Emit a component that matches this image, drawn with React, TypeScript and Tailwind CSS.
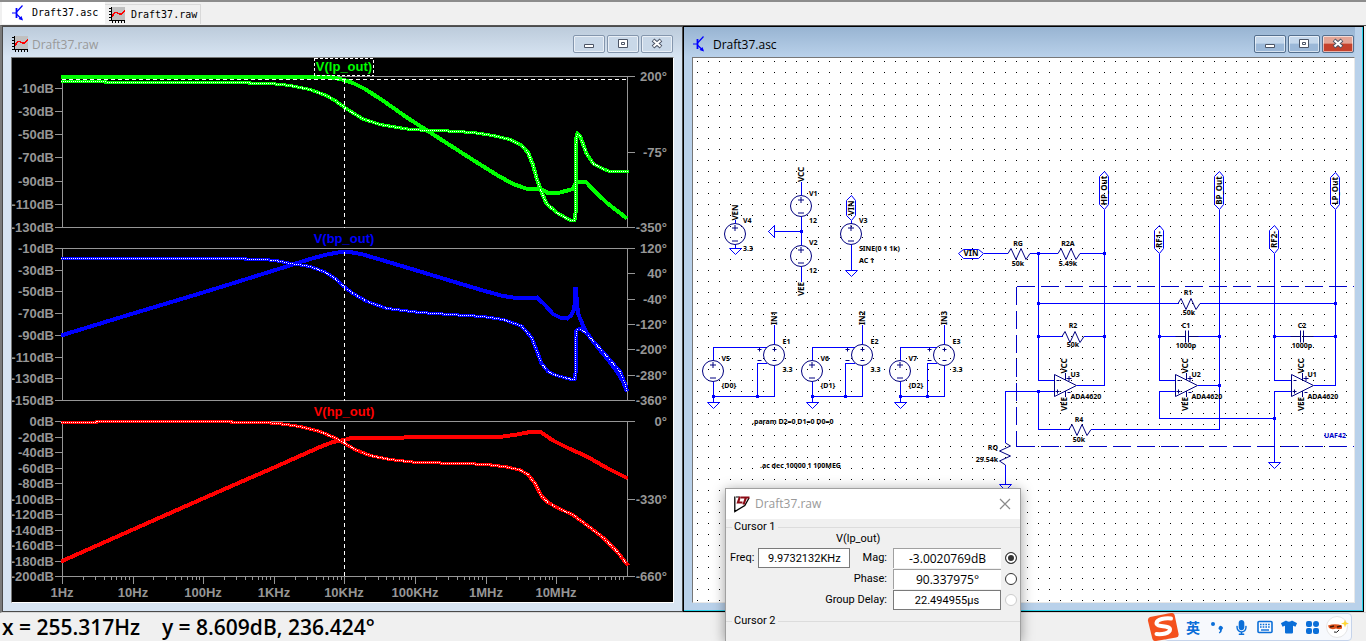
import { FaMicrophone, FaTshirt } from 'react-icons/fa';
import cn from 'clsx';

const styles = {
  axisText: 'fill-[#969696] font-["Liberation_Sans",sans-serif] text-[13px] font-bold',
  schematicText: 'fill-black font-["Noto_Sans",sans-serif] text-[7px] font-bold',
  netText: 'fill-black font-["Noto_Sans",sans-serif] text-[8px] font-bold',
  field: 'h-5 bg-white text-center text-black outline-none',
};

const LEFT = 62;
const RIGHT = 627;
const DECADE = 70.6;
const CURSOR_X = 344.5;

interface Tick {
  label: string;
  y: number;
}

interface Plot {
  name: string;
  color: string;
  top: number;
  bottom: number;
  left: Tick[];
  right: Tick[];
  magnitude: string;
  phase: string;
}

const ticks = (values: [string, number][]): Tick[] => values.map(([label, y]) => ({ label, y }));

const plots: Plot[] = [
  {
    name: 'V(lp_out)',
    color: '#00ff00',
    top: 76.5,
    bottom: 227.5,
    left: ticks([['-10dB', 88.5], ['-30dB', 111.5], ['-50dB', 134.5], ['-70dB', 157.5], ['-90dB', 181.5], ['-110dB', 204.5], ['-130dB', 227.5]]),
    right: ticks([['200°', 76.5], ['-75°', 152.5], ['-350°', 227.5]]),
    magnitude:
      '61,77 328,77 335,78 344,80 353,83 365,89 382,100 407,117.5 427,130.5 452,146.5 473,160 497,175 513,184 526,188.5 540,188.5 547,192.5 560,192.5 573,189 576,182 580,182.5 586,182 593,189.5 607,203 627,218.5',
    phase:
      '61,81.5 105,81.5 106,82.5 249,82.5 250,83.5 271,83.5 290,85.5 310,89.5 325,95 335,100.5 344,107 350,111 363,119 380,124.5 407,129 427,130.5 440,130.5 473,132.5 493,135.5 510,139.5 521,145 528,152.5 533,165 536.5,178 541.5,192 546.5,203.5 556.5,212.5 570,220 574.5,220.5 575.5,213 575.5,150 576.5,137 577.5,133.5 580,136 586.5,153.5 593.5,164 603.5,169 610,171.5 628,171.5',
  },
  {
    name: 'V(bp_out)',
    color: '#0000ff',
    top: 248.5,
    bottom: 400.5,
    left: ticks([['-10dB', 248.5], ['-30dB', 270.5], ['-50dB', 291.5], ['-70dB', 313.5], ['-90dB', 335.5], ['-110dB', 357.5], ['-130dB', 378.5], ['-150dB', 400.5]]),
    right: ticks([['120°', 248.5], ['40°', 273.5], ['-40°', 299.5], ['-120°', 324.5], ['-200°', 349.5], ['-280°', 375.5], ['-360°', 400.5]]),
    magnitude:
      '61,335.5 133,313.5 203,292.5 245,279.5 288,266 310,259 327,254.5 344,251.5 350,252 363,254.5 390,262.5 420,271.5 453,281.5 483,290.5 503,296 520,298.5 537,297.5 545,305 553,314 560,317.5 567,318.5 571,315.5 574,310 575,300 575.5,287 576.5,297 578,313.5 585,330 593,341.5 607,358.5 617,371.5 623,381.5 627,391.5',
    phase:
      '61,258.5 245,258.5 246,259.5 265,259.5 278,261 288,263 310,266.5 325,272 335,278.5 344,286.5 353,293.5 367,301.5 387,308.5 420,312.5 450,314.5 483,316.5 503,319.5 521.5,326 531.5,337.5 536.5,350 541.5,363.5 548,371.5 556.5,375.5 570,379 574.5,379.5 575.5,373 575.5,342 576.5,330 580,328.5 586.5,333.5 606.5,356 620,371.5 625,383.5 627,391.5',
  },
  {
    name: 'V(hp_out)',
    color: '#ff0000',
    top: 421.5,
    bottom: 576.5,
    left: ticks([['0dB', 421.5], ['-20dB', 437.5], ['-40dB', 452.5], ['-60dB', 468.5], ['-80dB', 483.5], ['-100dB', 499.5], ['-120dB', 514.5], ['-140dB', 530.5], ['-160dB', 545.5], ['-180dB', 561.5], ['-200dB', 576.5]]),
    right: ticks([['0°', 421.5], ['-330°', 499.5], ['-660°', 576.5]]),
    magnitude:
      '61,561.5 133,529.5 203,498.5 274,467.5 320,447 333,442 346,439.5 353,437.5 404,437.5 406,436.5 503,436.5 517,434.5 533,431.5 540,431.5 553,440.5 570,449 587,456.5 607,468 628,478.5',
    phase:
      '61,422.5 96,422.5 97,421.5 231,421.5 232,422.5 265,422.5 282,424 300,426.5 320,431.5 335,438 344,443 355,449.5 370,455.5 390,459.5 417,462.5 463,463.5 487,464.5 507,467 520,470 528,474.5 535,483.5 541.5,496 548,502.5 558,508 573,515 590,527.5 603,537.5 617,551.5 628,565.5',
  },
];

const frequencies = ['1Hz', '10Hz', '100Hz', '1KHz', '10KHz', '100KHz', '1MHz', '10MHz'];

function SchematicIcon() {
  return (
    <svg className="size-4 shrink-0" viewBox="0 0 16 16" fill="none" stroke="#0000ff" strokeWidth="1.2">
      <path d="M0 8h4M5 6.500l5.500-6M5 9.500l5 5" />
      <path d="M4.500 3v10" strokeWidth="1.800" />
      <path d="M11 15.500l-4.500-1.500 3-3z" fill="#0000ff" stroke="none" />
    </svg>
  );
}

function PlotIcon() {
  return (
    <svg className="size-4 shrink-0" viewBox="0 0 16 16" shapeRendering="crispEdges">
      <path d="M2 0h14v14H2z" fill="#c0c0c0" />
      <path d="M2.500 0v14M2 13.500h14" stroke="#000" />
      <path d="M0 1.500h2M0 4.500h2M0 7.500h2M0 10.500h2M0 13.500h2M3.500 14v2M6.500 14v2M9.500 14v2M12.500 14v2M15.500 14v2" stroke="#000" />
      <path d="M3 9.500l3-4h2l3 2 2-1 3-3" stroke="#ff0000" strokeWidth="1.600" fill="none" />
    </svg>
  );
}

function LtLogo() {
  return (
    <svg className="h-[18px] w-[18px] shrink-0" viewBox="0 0 18 18" fill="none">
      <path d="M1.800 1.500v15l10-6L16 3" stroke="#000" strokeWidth="1.300" />
      <path d="M3 2h3" stroke="#000" />
      <path d="M7 1.500L5 7.500h4.500M8 2.500h8.500M13 2.500L10.500 9.500" stroke="#8b0a14" strokeWidth="2.200" />
    </svg>
  );
}

function WindowButtons({ active }: { active?: boolean }) {
  const base = cn(
    'flex h-[18px] w-8 items-center justify-center rounded-xs border shadow-[inset_0_0_0_1px_#ffffff99]',
    active ? 'border-[#55708f] bg-linear-to-b from-[#c5d8ec] from-45% to-[#9bb8d8] to-50%' : 'border-[#8496ad] bg-[#c9d8e8]',
  );
  return (
    <div className="flex gap-0.5">
      <button type="button" aria-label="Minimize" className={base}>
        <svg className="h-3 w-3" viewBox="0 0 12 12">
          <path d="M1.500 6.500h9v3h-9z" fill="#fff" stroke="#4c5566" />
        </svg>
      </button>
      <button type="button" aria-label="Maximize" className={base}>
        <svg className="h-3 w-3" viewBox="0 0 12 12">
          <path d="M1.500 1.500h9v8h-9zM4.500 4.500h3v2h-3z" fill="#fff" stroke="#4c5566" />
        </svg>
      </button>
      <button
        type="button"
        aria-label="Close"
        className={cn(base, active && 'border-[#5c1a14] from-[#e3a596] to-[#c5412c]')}
      >
        <svg className="h-3 w-3" viewBox="0 0 12 12">
          <path d="M2 2l8 7M10 2L2 9" stroke="#4c5566" strokeWidth="4" />
          <path d="M2.500 2.500l7 6M9.500 2.500l-7 6" stroke="#fff" strokeWidth="2" />
        </svg>
      </button>
    </div>
  );
}

// Passes side by side give the slopes the weight of a square pen
function Trace({ points, color }: { points: string; color: string }) {
  return (
    <g stroke={color} strokeWidth="3">
      <polyline points={points} transform="translate(-0.5 0)" />
      <polyline points={points} transform="translate(0.5 0)" />
    </g>
  );
}

function PlotChart() {
  return (
    <svg className="block h-full w-full" viewBox="12 58 661 544" role="img" aria-label="AC analysis">
      {plots.map((plot) => (
        <g key={plot.name}>
          <g stroke="#969696" fill="none" shapeRendering="crispEdges">
            <path d={`M${LEFT} ${plot.top}H635M55 ${plot.bottom}H635M62.500 ${plot.top}V${plot.bottom}M627.500 ${plot.top}V${plot.bottom}`} />
            {plot.left.map(({ y }) => (
              <path key={y} d={`M55 ${y}h7`} />
            ))}
            {plot.right.map(({ y }) => (
              <path key={y} d={`M${RIGHT} ${y}h8`} />
            ))}
          </g>
          {plot.left.map(({ label, y }) => (
            <text key={label} className={styles.axisText} x="54" y={y + 4.5} textAnchor="end">
              {label}
            </text>
          ))}
          {plot.right.map(({ label, y }) => (
            <text key={label} className={styles.axisText} x="667" y={y + 4.5} textAnchor="end">
              {label}
            </text>
          ))}
          <text className='font-["Liberation_Sans",sans-serif] text-[13px] font-bold' fill={plot.color} x="344" y={plot.top - 5.5} textAnchor="middle">
            {plot.name}
          </text>
          <g fill="none" shapeRendering="crispEdges">
            <polyline points={plot.magnitude} stroke={plot.color} strokeWidth="4" />
            <Trace points={plot.phase} color={plot.color} />
            <polyline points={plot.phase} stroke="#fff" strokeDasharray="1 1" />
            <path d={`M${CURSOR_X} ${plot.top + 3}V${plot.bottom}`} stroke="#fff" strokeDasharray="4 3" />
          </g>
        </g>
      ))}
      <g fill="none" stroke="#fff" shapeRendering="crispEdges">
        <path d="M62 79.500H627" strokeDasharray="4 3" />
        <rect x="314.500" y="58.500" width="59" height="17" strokeDasharray="3 2" />
      </g>
      {frequencies.map((label, i) => (
        <g key={label}>
          <g stroke="#969696" shapeRendering="crispEdges">
            <path d={`M${Math.round(LEFT + i * DECADE) + 0.5} 576v8`} />
            {[2, 3, 4, 5, 6, 7, 8, 9].map((n) => (
              <path key={n} d={`M${Math.floor(LEFT + (i + Math.log10(n)) * DECADE) + 0.5} 576v4`} />
            ))}
          </g>
          <text className={styles.axisText} x={Math.round(LEFT + i * DECADE)} y="597" textAnchor="middle">
            {label}
          </text>
        </g>
      ))}
    </svg>
  );
}

interface LabelProps {
  x: number;
  y: number;
  children: string;
  anchor?: 'start' | 'middle' | 'end';
}

function Label({ x, y, children, anchor = 'start' }: LabelProps) {
  return (
    <text className={styles.schematicText} x={x} y={y + 2.5} textAnchor={anchor} stroke="none">
      {children}
    </text>
  );
}

function NetLabel({ x, y, children }: LabelProps) {
  return (
    <text className={styles.netText} transform={`translate(${x + 3} ${y}) rotate(-90)`} textAnchor="middle" stroke="none">
      {children}
    </text>
  );
}

function Node({ x, y }: { x: number; y: number }) {
  return <rect x={x - 1.5} y={y - 1.5} width="3" height="3" fill="#0000ff" stroke="none" />;
}

function Ground({ x, y }: { x: number; y: number }) {
  return <path d={`M${x - 6} ${y}h12l-6 6z`} />;
}

function Source({ x, y }: { x: number; y: number }) {
  return (
    <g stroke="#000080">
      <circle cx={x} cy={y} r="10.500" />
      <path d={`M${x - 3} ${y - 6}h6M${x} ${y - 9}v6M${x - 3} ${y + 7}h6`} />
    </g>
  );
}

function Resistor({ x, y }: { x: number; y: number }) {
  return <path stroke="#000080" d={`M${x} ${y}l3-5 5 11 5-11 5 11 4-6`} />;
}

function Capacitor({ x, y }: { x: number; y: number }) {
  return <path stroke="#000080" d={`M${x - 10} ${y}h10M${x + 3} ${y}h10M${x} ${y - 6}v12M${x + 3} ${y - 6}v12`} />;
}

// Net flag drawn as a vertical hexagon
function Port({ x, top, bottom, name }: { x: number; top: number; bottom: number; name: string }) {
  return (
    <>
      <path d={`M${x} ${top}l4 5V${bottom - 5}l-4 5-5-5V${top + 5}z`} />
      <NetLabel x={x - 0.5} y={(top + bottom) / 2}>
        {name}
      </NetLabel>
    </>
  );
}

function OpAmp({ x, name }: { x: number; name: string }) {
  return (
    <>
      <path
        stroke="#000080"
        d={`M${x} 374.500v22l22-11zM${x + 2} 380.500h3M${x + 1} 391.500h4M${x + 3} 389.500v4M${x + 11} 373v7M${x + 11} 391v6M${x + 12} 378.500h5M${x + 14.5} 376v5M${x + 13} 392.500h3`}
      />
      <NetLabel x={x + 9} y={366}>VCC</NetLabel>
      <NetLabel x={x + 9} y={404}>VEE</NetLabel>
      <Label x={x + 16} y={374.5}>{name}</Label>
      <Label x={x + 16} y={396.5}>ADA4620</Label>
    </>
  );
}

const enables = [
  { vx: 713.5, ex: 774.5, source: 'V5', value: '{D0}', amp: 'E1', net: 'IN1' },
  { vx: 812.5, ex: 862.5, source: 'V6', value: '{D1}', amp: 'E2', net: 'IN2' },
  { vx: 900.5, ex: 944.5, source: 'V7', value: '{D2}', amp: 'E3', net: 'IN3' },
];

function Schematic() {
  return (
    <svg className="block h-full w-full" role="img" aria-label="Schematic">
      <defs>
        <pattern id="grid" width="11" height="11" x="4" y="3" patternUnits="userSpaceOnUse">
          <rect width="1" height="1" fill="#000" />
        </pattern>
      </defs>
      <rect width="100%" height="100%" fill="url(#grid)" shapeRendering="crispEdges" />
      <g transform="translate(-693 -58)" fill="none" stroke="#0000ff">
        <g shapeRendering="crispEdges">
          <path d="M801.500 182v13M801.500 217v28M801.500 267v15M774 231.500h27M735.500 220v3M735.500 245v4M851.500 221v3M851.500 245v25" />
          <path d="M768.500 231.500l6-6v12z" />
          <path d="M984 253.500h24M1030 253.500h28M1080 253.500h24M1104.500 210v175.500M1077 385.500h27.500" />
          <path d="M1038.500 253.500v127h16M1038.500 303.500h140M1200 303.500h135M1038.500 336.500h24M1084 336.500h20" />
          <path d="M1005.500 443v-51.500h49M1038.500 391.500v38h31M1091 429.500h128.500V210M1005.500 465v19" />
          <path d="M1159.500 254v126.500h16M1159.500 336.500h20M1195 336.500h24M1175.500 391.500h-16v27h115M1198 385.500h21" />
          <path d="M1274.500 254v126.500h17M1274.500 336.500h20M1310 336.500h25M1291.500 391.500h-17v71M1314 385.500h21.500V210" />
          <path d="M1016.500 286.500H1355M1016.500 286.500V446.500M1016.500 446.500H1355" stroke="#0000c8" strokeDasharray="18 6" />
        </g>

        <Source x={801} y={206} />
        <Source x={801} y={256} />
        <Source x={735} y={234} />
        <Source x={851} y={234} />
        <Ground x={735.5} y={248.5} />
        <Ground x={851.5} y={270.5} />
        <Ground x={1005.5} y={484.5} />
        <Ground x={1274.5} y={462.5} />
        <Port x={851.5} top={195.5} bottom={220.5} name="VIN" />
        <Port x={1104.5} top={171.5} bottom={209.5} name="HP_Out" />
        <Port x={1219.5} top={171.5} bottom={209.5} name="BP_Out" />
        <Port x={1335.5} top={172.5} bottom={209.5} name="LP_Out" />
        <Port x={1159.5} top={225.5} bottom={253.5} name="RF1-" />
        <Port x={1274.5} top={225.5} bottom={253.5} name="RF2-" />
        <path d="M958.500 253.500l5-4h15l5 4-5 5h-15z" />
        <text className={styles.netText} x="971" y="256" textAnchor="middle" stroke="none">
          VIN
        </text>

        {enables.map(({ vx, ex, source, value, amp, net }) => (
          <g key={source}>
            <path
              shapeRendering="crispEdges"
              d={`M${vx} 360v-12.500H${ex - 8}M${vx} 382v20M${vx} 396.500H${ex}V366M${ex} 325v19M${ex - 17} 396.500v-33h9`}
            />
            <Source x={vx - 0.5} y={371} />
            <g stroke="#000080">
              <circle cx={ex - 0.5} cy="355" r="10.500" />
              <path d={`M${ex - 2} 349.500h4M${ex} 347.500v4M${ex - 2} 360.500h4M${ex - 17} 349.500h4M${ex - 15} 347.500v4M${ex - 17} 360.500h4`} />
            </g>
            <Ground x={vx} y={402.5} />
            <Node x={vx} y={396.5} />
            <Node x={ex - 17} y={396.5} />
            <Label x={vx + 8} y={358.5}>{source}</Label>
            <Label x={vx + 8} y={385.5}>{value}</Label>
            <Label x={ex + 8} y={341.5}>{amp}</Label>
            <Label x={ex + 8} y={369.5}>3.3</Label>
            <NetLabel x={ex - 1} y={318}>{net}</NetLabel>
          </g>
        ))}

        <Resistor x={1008} y={253.5} />
        <Resistor x={1058} y={253.5} />
        <Resistor x={1178} y={303.5} />
        <Resistor x={1062} y={336.5} />
        <Resistor x={1069} y={429.5} />
        <path stroke="#000080" d="M1005.500 443l5 3-11 5 11 5-11 5 6 4" />
        <Capacitor x={1185.5} y={336.5} />
        <Capacitor x={1300.5} y={336.5} />

        <Node x={801.5} y={231.5} />
        <Node x={1038.5} y={253.5} />
        <Node x={1104.5} y={253.5} />
        <Node x={1038.5} y={303.5} />
        <Node x={1335.5} y={303.5} />
        <Node x={1038.5} y={336.5} />
        <Node x={1104.5} y={336.5} />
        <Node x={1159.5} y={336.5} />
        <Node x={1219.5} y={336.5} />
        <Node x={1274.5} y={336.5} />
        <Node x={1335.5} y={336.5} />
        <Node x={1038.5} y={391.5} />
        <Node x={1219.5} y={385.5} />
        <Node x={1274.5} y={418.5} />

        <OpAmp x={1054.5} name="U3" />
        <OpAmp x={1175.5} name="U2" />
        <OpAmp x={1291.5} name="U1" />
        <NetLabel x={800.5} y={174.5}>VCC</NetLabel>
        <NetLabel x={800.5} y={289}>VEE</NetLabel>
        <NetLabel x={735} y={212.5}>VEN</NetLabel>
        <Label x={809} y={193.5}>V1</Label>
        <Label x={809} y={220.5}>12</Label>
        <Label x={809} y={242.5}>V2</Label>
        <Label x={809} y={270.5}>12</Label>
        <Label x={743} y={220.5}>V4</Label>
        <Label x={743} y={248.5}>3.3</Label>
        <Label x={859} y={220.5}>V3</Label>
        <Label x={859} y={248.5}>SINE(0 1 1k)</Label>
        <Label x={859} y={260.5}>AC 1</Label>
        <Label x={752} y={421.5}>.param D2=0 D1=0 D0=0</Label>
        <Label x={760} y={465.5}>.ac dec 10000 1 100MEG</Label>
        <Label x={1018} y={243.5} anchor="middle">RG</Label>
        <Label x={1018} y={263.5} anchor="middle">50k</Label>
        <Label x={1068} y={243.5} anchor="middle">R2A</Label>
        <Label x={1068} y={263.5} anchor="middle">5.49k</Label>
        <Label x={1188} y={292.5} anchor="middle">R1</Label>
        <Label x={1189} y={312.5} anchor="middle">50k</Label>
        <Label x={1073} y={325.5} anchor="middle">R2</Label>
        <Label x={1073} y={344.5} anchor="middle">50k</Label>
        <Label x={1079} y={419.5} anchor="middle">R4</Label>
        <Label x={1079} y={439.5} anchor="middle">50k</Label>
        <Label x={1186} y={325.5} anchor="middle">C1</Label>
        <Label x={1186} y={345.5} anchor="middle">1000p</Label>
        <Label x={1302} y={325.5} anchor="middle">C2</Label>
        <Label x={1302} y={345.5} anchor="middle">1000p</Label>
        <Label x={998} y={447.5} anchor="end">RQ</Label>
        <Label x={998} y={459.5} anchor="end">29.54k</Label>
        <text className='fill-[#0000c8] font-["Noto_Sans",sans-serif] text-[7px] font-bold' x="1335" y="438" textAnchor="middle" stroke="none">
          UAF42
        </text>
      </g>
    </svg>
  );
}

function CursorRadio({ label, checked, disabled }: { label: string; checked?: boolean; disabled?: boolean }) {
  return (
    <input
      type="radio"
      name="cursor1"
      aria-label={label}
      defaultChecked={checked}
      disabled={disabled}
      className="size-3 appearance-none rounded-full border border-[#333] bg-white checked:bg-[#333] checked:shadow-[inset_0_0_0_2px_#fff] disabled:border-[#ccc]"
    />
  );
}

function CursorDialog() {
  return (
    <section
      aria-label="Cursors"
      className='absolute bottom-0 left-[725px] h-[153px] w-[296px] overflow-hidden border border-b-0 border-[#a0a0a0] bg-[#f0f0f0] font-[Roboto,sans-serif] text-[11px] leading-4 text-black shadow-[0_2px_12px_#00000066]'
    >
      <header className="flex h-[30px] items-center gap-1 bg-white pr-2 pl-[7px]">
        <LtLogo />
        <h2 className='grow font-["Open_Sans",sans-serif] text-xs text-[#999]'>Draft37.raw</h2>
        <button type="button" aria-label="Close">
          <svg className="size-3.5" viewBox="0 0 14 14">
            <path d="M2 2l10 10M12 2L2 12" stroke="#8a8a8a" strokeWidth="1.200" />
          </svg>
        </button>
      </header>
      <fieldset className="h-[94px] border-t border-[#dcdcdc]">
        <legend className="ml-1.5 px-0.5">Cursor 1</legend>
        <p className="-mt-1 ml-[110px] pb-px">V(lp_out)</p>
        <div className="flex justify-between pr-[3px] pl-1">
          <div className="flex h-5 items-center gap-1">
            <label htmlFor="freq">Freq:</label>
            <input id="freq" readOnly defaultValue="9.9732132KHz" className={cn(styles.field, 'w-[92px] border border-[#7a7a7a]')} />
          </div>
          <div className="grid shrink-0 grid-cols-[auto_108px_12px] items-center gap-x-1 gap-y-px text-right whitespace-nowrap">
            <label htmlFor="mag" className="pr-0.5">Mag:</label>
            <input
              id="mag"
              readOnly
              defaultValue="-3.0020769dB"
              className={cn(styles.field, 'border-t border-l border-[#a0a0a0] font-["Open_Sans",sans-serif] text-xs')}
            />
            <CursorRadio label="Use magnitude" checked />
            <label htmlFor="phase" className="pr-0.5">Phase:</label>
            <input
              id="phase"
              readOnly
              defaultValue="90.337975°"
              className={cn(styles.field, 'border-t border-l border-[#a0a0a0] font-["Open_Sans",sans-serif] text-xs')}
            />
            <CursorRadio label="Use phase" />
            {/* the long caption reaches left, under the frequency box */}
            <label htmlFor="delay" className="-ml-8 pr-0.5">Group Delay:</label>
            <input id="delay" readOnly defaultValue="22.494955µs" className={cn(styles.field, 'border border-[#7a7a7a]')} />
            <CursorRadio label="Use group delay" disabled />
          </div>
        </div>
      </fieldset>
      <fieldset className="h-10 border-t border-[#dcdcdc]">
        <legend className="ml-1.5 px-0.5">Cursor 2</legend>
      </fieldset>
    </section>
  );
}

function ImeBar() {
  return (
    <div className="relative flex h-7 items-center rounded-sm border border-[#c5d3ea] bg-[#f7f9fd] pr-0.5 pl-4 text-[#0a6ed8]">
      <svg className="absolute -left-[18px] h-7 w-8" viewBox="0 0 32 28">
        <path d="M3 4L24 0q3-.4 3.600 2l4 19q.4 3-2.500 3.500L9 28q-3 .5-3.700-2.500L1 8q-.5-3 2-4z" fill="#f4511e" />
        <path d="M24 5.500c-6-.5-14 .5-14.500 4.500-.4 4.500 13.500 2 13.500 6.500 0 4-8 5-13.500 4.500" fill="none" stroke="#fff" strokeWidth="4" strokeLinecap="round" />
      </svg>
      <div className="flex items-center text-center">
        <span className='w-6 font-["Noto_Sans_CJK_SC",sans-serif] text-sm leading-6 font-bold'>英</span>
        <svg className="h-4 w-6" viewBox="0 0 24 16" fill="#0a6ed8">
          <circle cx="8" cy="5" r="2" />
          <path d="M14 8a2 2 0 1 1 3 2.500q0 3-2.500 4l-.7-1q1.500-1 1.200-2.500A2 2 0 0 1 14 8z" />
        </svg>
        <span className="flex w-6 justify-center"><FaMicrophone size={15} /></span>
        <svg className="h-4 w-6" viewBox="0 0 24 16" fill="none" stroke="#0a6ed8">
          <rect x="5" y="2.500" width="14" height="11" rx="1" strokeWidth="1.600" />
          <path d="M7 5.500h10M7 8h10" strokeWidth="1.600" strokeDasharray="1.600 1.100" />
          <path d="M8 11h8" strokeWidth="1.400" />
        </svg>
        <span className="flex w-6 justify-center"><FaTshirt size={16} /></span>
        <svg className="h-4 w-6" viewBox="0 0 24 16" fill="#0a6ed8">
          <rect x="5" y="2" width="6" height="6" rx="2" />
          <rect x="12" y="2" width="6" height="6" rx="3" />
          <rect x="5" y="9" width="6" height="6" rx="2" />
          <rect x="12" y="9" width="6" height="6" rx="2" />
        </svg>
        <svg className="h-6 w-6" viewBox="0 0 24 24">
          <circle cx="12" cy="12" r="10.500" fill="#fff" stroke="#e6e6e6" />
          <path d="M3 10.500q7-2.500 14 0v3q-3 1.500-6 0-4 1.500-7-.5z" fill="#e0521b" />
          <path d="M5 12l4-1M12 12l4-1" stroke="#40180a" strokeWidth="1.500" />
          <path d="M9 17q3 1.500 5-2" stroke="#222" fill="none" />
          <path d="M20 4.500l1 3 3 1-3 1-1 3-1-3-3-1 3-1z" fill="#ffd633" />
        </svg>
      </div>
    </div>
  );
}

export default function App() {
  return (
    <div className="relative flex h-screen flex-col overflow-hidden bg-[#f0f0f0] text-black">
      <nav className='flex h-[25px] shrink-0 items-start border-t-2 border-[#8c8c8c] pl-0.5 font-["DejaVu_Sans_Mono",monospace] text-[10px] leading-5'>
        <a href="#asc" className="flex h-[22px] w-[103px] items-center gap-1 bg-white pl-2.5">
          <SchematicIcon />
          Draft37.asc
        </a>
        <a href="#raw" className="mt-0.5 flex h-5 w-24 items-center gap-1.5 border-t border-r border-[#d9d9d9] pl-1">
          <PlotIcon />
          Draft37.raw
        </a>
      </nav>

      <main className="grid min-h-0 flex-1 grid-cols-2 border-t border-b border-l-2 border-t-[#555] border-b-[#d8d8d8] border-l-[#7a7a7a] pr-0.5">
        <section className="flex min-h-0 flex-col border border-[#4a4a4a] bg-[#d7e4f2] px-2 pb-2">
          <header className="-mx-2 flex h-[30px] shrink-0 items-center gap-1 bg-linear-to-b from-[#bccbdb] to-[#d7e4f2] pt-1 pr-[9px] pl-[9px]">
            <PlotIcon />
            <h1 className='grow pt-0.5 font-["Open_Sans",sans-serif] text-xs text-[#999]'>Draft37.raw</h1>
            <WindowButtons />
          </header>
          <div className="min-h-0 flex-1 border border-t-[#777] border-r-white border-b-white border-l-[#777] bg-black">
            <PlotChart />
          </div>
        </section>

        <section className="flex min-h-0 flex-col border border-black bg-[#b9d1ea] px-2 pb-2 shadow-[inset_-1px_-1px_0_#27d3ea]">
          <header className="-ml-2 flex h-[30px] shrink-0 items-center gap-1 bg-linear-to-b from-[#98b4d2] to-[#b9d1ea] pt-1 pr-px pl-[9px]">
            <SchematicIcon />
            <h1 className='grow pt-0.5 font-["Open_Sans",sans-serif] text-xs text-black'>Draft37.asc</h1>
            <WindowButtons active />
          </header>
          <div className="min-h-0 flex-1 border border-t-[#777] border-r-[#e8e8e8] border-b-[#e8e8e8] border-l-[#777] bg-white">
            <Schematic />
          </div>
        </section>
      </main>

      <footer className="flex h-7 shrink-0 items-center justify-between pr-3.5 pl-0.5">
        <p className='font-["Open_Sans",sans-serif] text-[21px] leading-7 font-semibold whitespace-pre'>
          {'x = 255.317Hz    y = 8.609dB, 236.424°'}
        </p>
        <ImeBar />
      </footer>

      <CursorDialog />
    </div>
  );
}
